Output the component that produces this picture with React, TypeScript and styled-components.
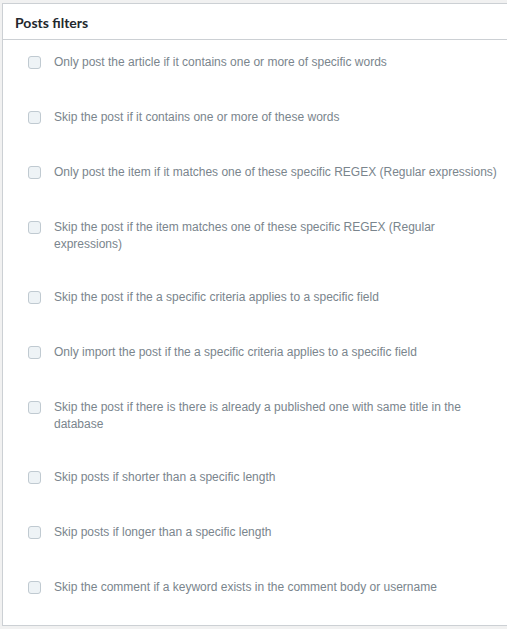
import { createGlobalStyle, styled } from 'styled-components'

const GlobalStyle = createGlobalStyle`
  html, body {
    margin: 0;
    padding: 0;
    background: #f1f1f1;
    overflow: hidden;
  }
`

const Page = styled.div`
  padding: 3px 0 3px 2px;
`

const Card = styled.section`
  background: #fff;
  border: 1px solid #ccd0d4;
  border-right: none;
`

const Header = styled.div`
  height: 35px;
  display: flex;
  align-items: center;
  padding: 0 12px;
  border-bottom: 1px solid #ccd0d4;
`

const Title = styled.h2`
  margin: 0 0 -1px;
  font-family: Lato, 'Open Sans', sans-serif;
  font-size: 14px;
  font-weight: 700;
  color: #23282d;
`

const List = styled.div`
  padding: 0 0 5px;
`

const Row = styled.label`
  display: flex;
  align-items: flex-start;
  gap: 13px;
  min-height: 19px;
  padding: 14px 6px 22px 25px;
`

const Box = styled.input.attrs({ type: 'checkbox' })`
  appearance: none;
  flex: none;
  width: 13px;
  height: 13px;
  margin: 2px 0 0;
  border: 1px solid #c0cad1;
  border-radius: 3px;
  background: #eef3f6;
  box-sizing: border-box;
`

const Text = styled.span`
  font-family: 'Liberation Sans', Arial, sans-serif;
  font-size: 12px;
  line-height: 17px;
  color: #7a858d;
`

const filters = [
  'Only post the article if it contains one or more of specific words',
  'Skip the post if it contains one or more of these words',
  'Only post the item if it matches one of these specific REGEX (Regular expressions)',
  'Skip the post if the item matches one of these specific REGEX (Regular expressions)',
  'Skip the post if the a specific criteria applies to a specific field',
  'Only import the post if the a specific criteria applies to a specific field',
  'Skip the post if there is there is already a published one with same title in the database',
  'Skip posts if shorter than a specific length',
  'Skip posts if longer than a specific length',
  'Skip the comment if a keyword exists in the comment body or username',
]

export default function App() {
  return (
    <>
      <GlobalStyle />
      <Page>
        <Card>
          <Header>
            <Title>Posts filters</Title>
          </Header>
          <List>
            {filters.map((f) => (
              <Row key={f}>
                <Box />
                <Text>{f}</Text>
              </Row>
            ))}
          </List>
        </Card>
      </Page>
    </>
  )
}
